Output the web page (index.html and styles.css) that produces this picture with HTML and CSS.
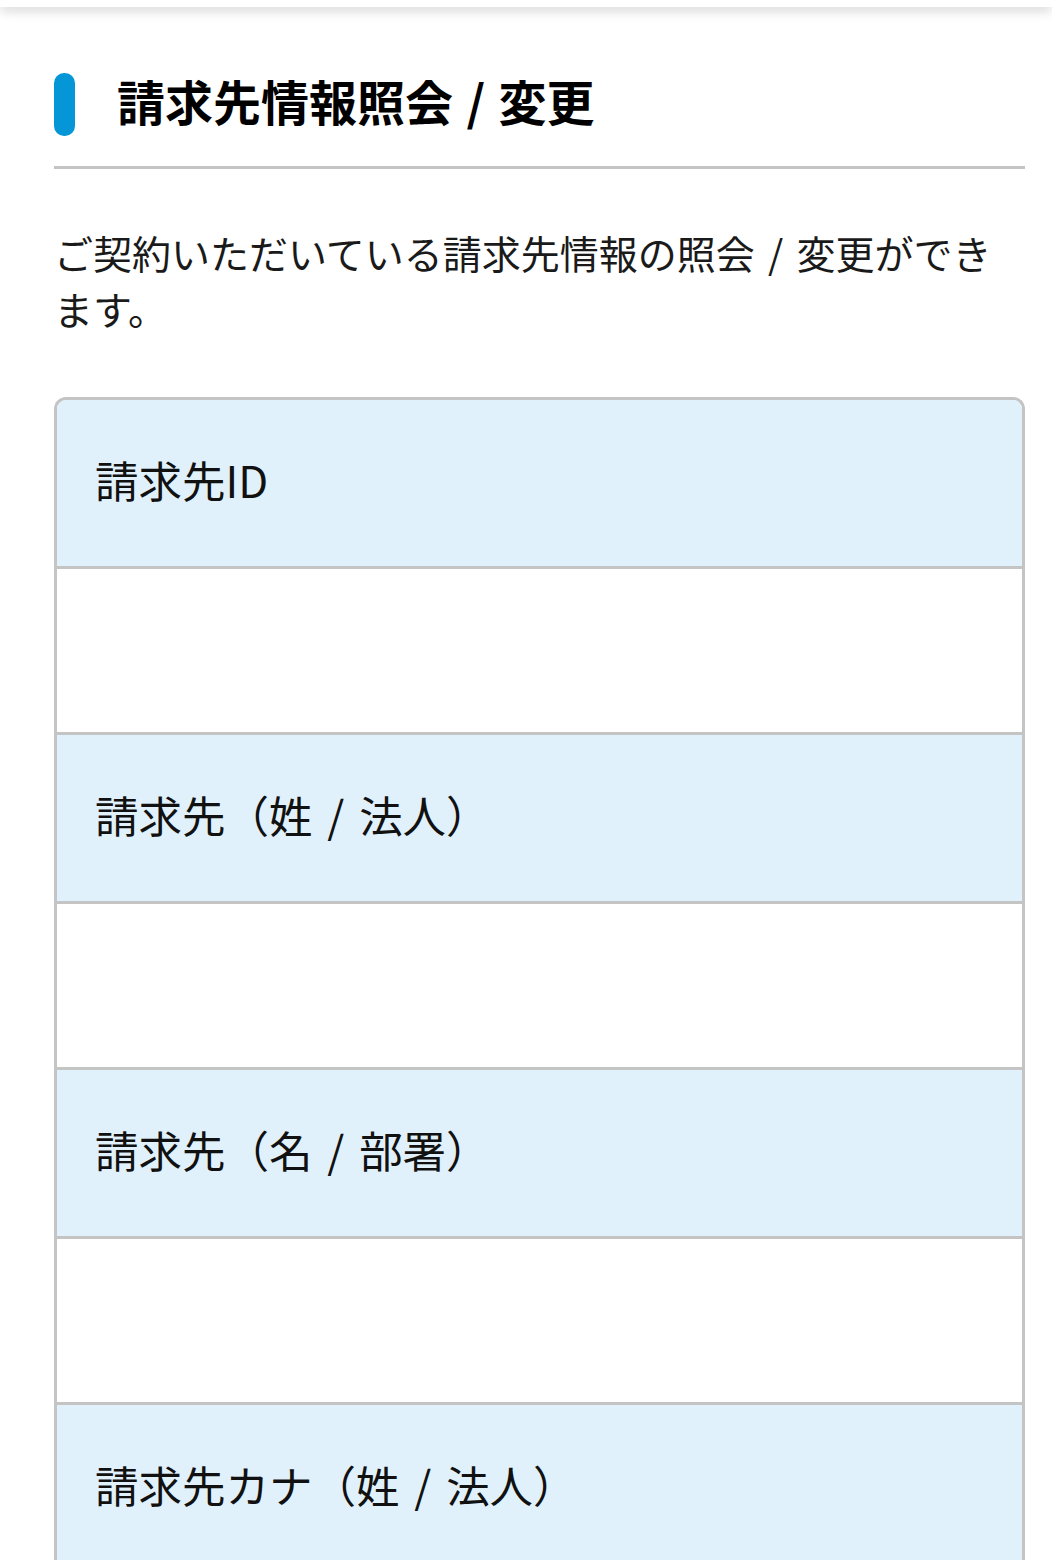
FILE: index.html
```html
<!DOCTYPE html>
<html lang="ja">
<head>
<meta charset="UTF-8">
<title>請求先情報照会 / 変更</title>
<link rel="stylesheet" href="styles.css">
</head>
<body>
	<div class="topbar"></div>
	<div class="content">
		<h1 class="pageTitle"><span class="titleMark"></span><span class="titleText">請求先情報照会<span class="sep">/</span>変更</span></h1>
		<p class="lead">ご契約いただいている請求先情報の照会 / 変更ができます。</p>
		<div class="infoTable">
			<div class="infoLabel">請求先ID</div>
			<div class="infoValue"></div>
			<div class="infoLabel">請求先（姓<span class="sep">/</span>法人）</div>
			<div class="infoValue"></div>
			<div class="infoLabel">請求先（名<span class="sep">/</span>部署）</div>
			<div class="infoValue"></div>
			<div class="infoLabel">請求先カナ（姓<span class="sep">/</span>法人）</div>
			<div class="infoValue"></div>
		</div>
	</div>
</body>
</html>
```

FILE: styles.css
```css
html, body {
	margin: 0px;
	padding: 0px;
	background: #fff;
	color: #111;
	font-family: "Noto Sans CJK JP", "Noto Sans", sans-serif;
}
.topbar {
	height: 7px;
	background: #fff;
	box-shadow: 0 3px 12px rgba(0, 0, 0, 0.22);
	position: relative;
}
.content {
	padding: 0 27px 0 54px;
}
/* slash between words, with a bit of air on both sides */
.sep {
	padding: 0 0.3em;
}
.pageTitle {
	display: flex;
	align-items: center;
	margin: 66px 0 0 0;
	padding-bottom: 30px;
	border-bottom: 3px solid #c4c4c4;
	font-size: 48px;
	font-weight: bold;
	color: #000;
}
.pageTitle .sep {
	padding: 0 0.28em;
}
.titleText {
	line-height: 55px;
	margin-bottom: 8px;
}
.titleMark {
	flex: none;
	width: 21px;
	height: 63px;
	border-radius: 10px;
	background: #0596d8;
	margin-right: 42px;
}
.lead {
	margin: 55px 0 61px 0;
	font-size: 39px;
	line-height: 56px;
	word-spacing: 4.5px;
	color: #1a1a1a;
}
.infoTable {
	border: 3px solid #c4c4c4;
	border-bottom: none;
	border-radius: 12px 12px 0 0;
	overflow: hidden;
}
.infoLabel {
	display: flex;
	align-items: center;
	box-sizing: border-box;
	height: 169px;
	padding: 0 0 8px 38px;
	background: #e1f1fc;
	border-bottom: 3px solid #c4c4c4;
	font-size: 43.5px;
	color: #111;
}
.infoLabel .sep {
	padding: 0 0.34em;
}
.infoValue {
	height: 163px;
	background: #fff;
	border-bottom: 3px solid #c4c4c4;
}
```
